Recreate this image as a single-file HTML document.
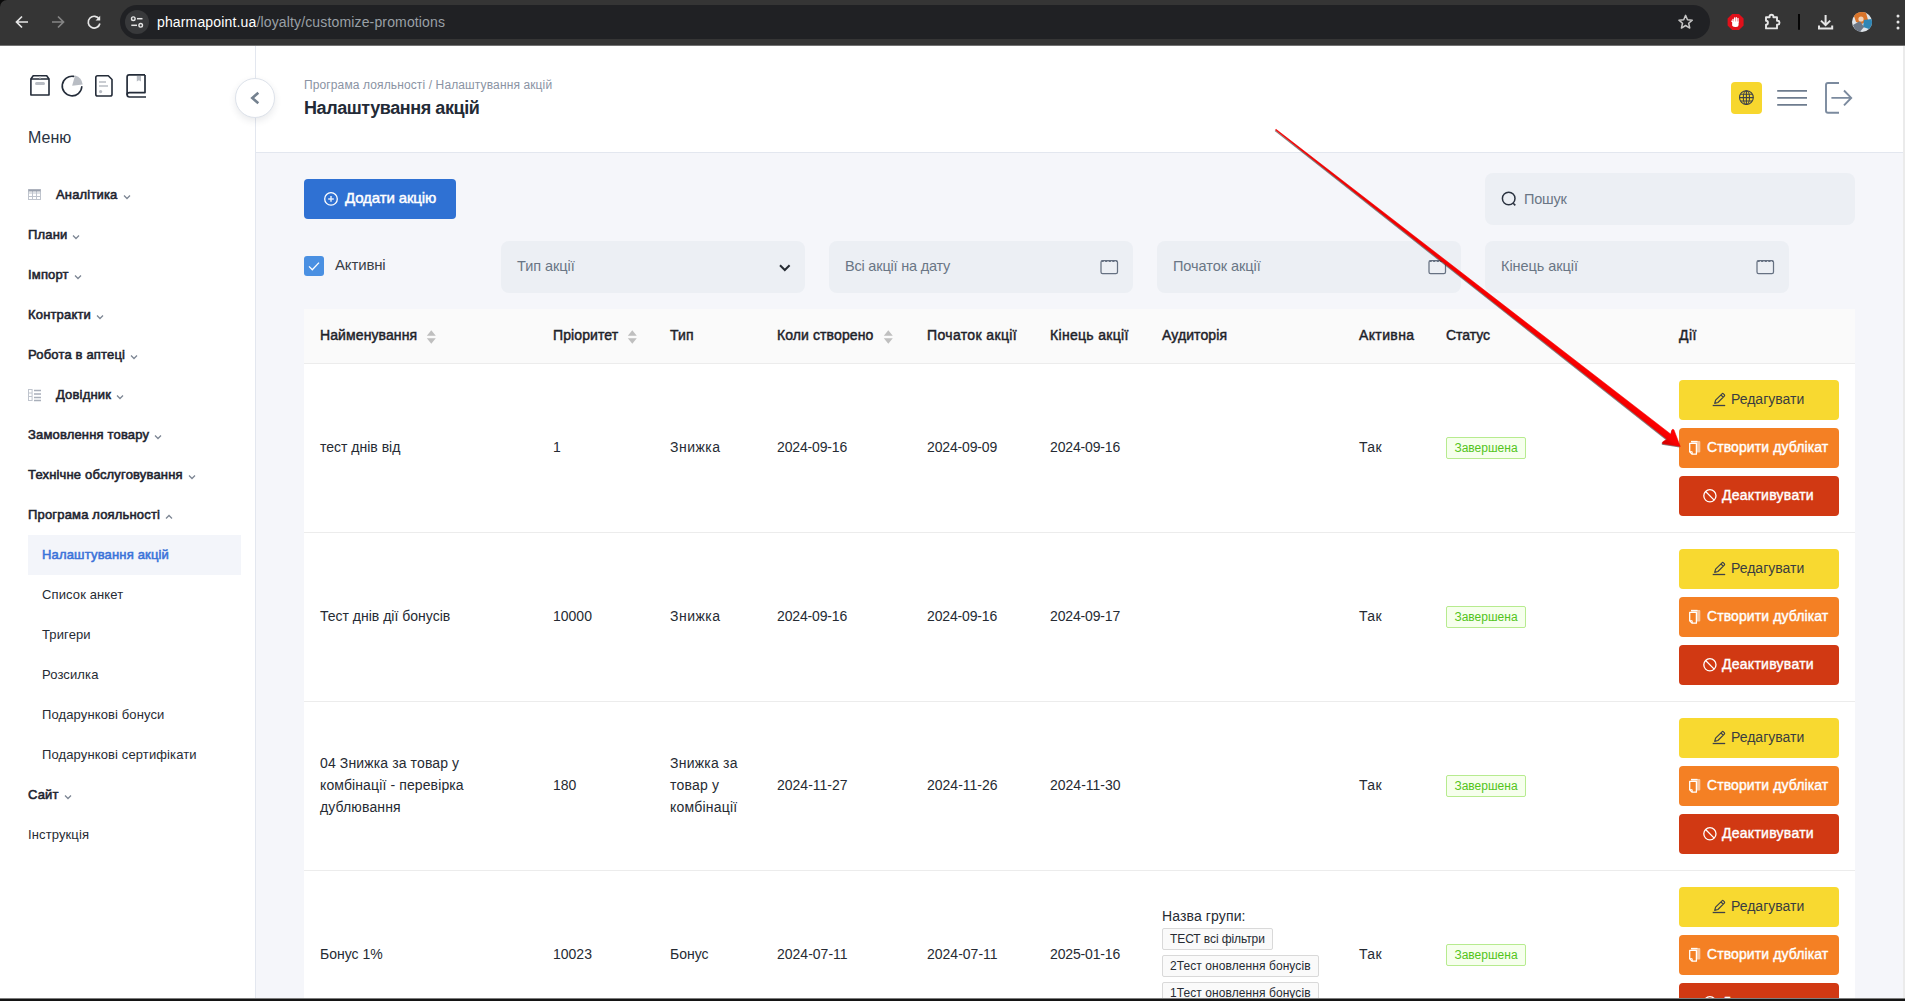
<!DOCTYPE html>
<html lang="uk">
<head>
<meta charset="utf-8">
<title>Налаштування акцій</title>
<style>
*{box-sizing:border-box;margin:0;padding:0}
html,body{width:1905px;height:1001px;overflow:hidden;background:#f5f6fa}
body{position:relative;font-family:"Liberation Sans",sans-serif;color:#262b33;font-size:14px}
.abs{position:absolute}
span.t{position:absolute;white-space:nowrap;line-height:1}
.m{-webkit-text-stroke:0.45px currentColor}
/* browser chrome */
#chrome{position:absolute;left:0;top:0;width:1905px;height:46px;background:#353535;border-bottom:1px solid #727272}
#pill{position:absolute;left:120px;top:5px;width:1590px;height:34px;border-radius:17px;background:#202124}
#sitei{position:absolute;left:125px;top:10px;width:24px;height:24px;border-radius:12px;background:#38393b}
/* sidebar */
#sidebar{position:absolute;left:0;top:46px;width:256px;height:955px;background:#fff;border-right:1px solid #e3e7ef}
.mi{position:absolute;left:28px;letter-spacing:.17px;-webkit-text-stroke:0.55px currentColor;font-size:13px;color:#1d232e;white-space:nowrap;line-height:16px}
.mi.sub{left:42px;letter-spacing:.12px;-webkit-text-stroke:0;color:#262b33}
.mi svg.chev{display:inline-block;vertical-align:middle;margin-left:5px;margin-top:3px}
/* header */
#header{position:absolute;left:256px;top:46px;width:1649px;height:107px;background:#fff;border-bottom:1px solid #e3e7ef}
/* filters */
.fbox{position:absolute;top:241px;width:304px;height:52px;border-radius:8px;background:#eceff4}
.fbox span{position:absolute;left:16px;top:16px;font-size:14.5px;letter-spacing:-.05px;line-height:18px;color:#6a7685;white-space:nowrap}
.cal{position:absolute;left:271px;top:18px}
/* table */
#thead{position:absolute;left:304px;top:309px;width:1551px;height:55px;background:#fafafa;border-bottom:1px solid #ececec}
#thead span{position:absolute;top:17px;letter-spacing:.1px;-webkit-text-stroke:0.45px currentColor;font-size:14px;line-height:18px;color:#1e2229;white-space:nowrap}
.sort{position:absolute;top:21px}
.row{position:absolute;left:304px;width:1551px;height:169px;background:#fff;border-bottom:1px solid #ececec}
.c{position:absolute;font-size:14px;line-height:22px;color:#262b33;white-space:nowrap}
.btn{position:absolute;left:1375px;width:160px;height:40px;border-radius:4px;font-size:14px;line-height:40px;white-space:nowrap}
.btn span{position:absolute;top:-1px}
.b1{background:#f8d930;color:#3a3d40}
.b2{background:#f48024;color:#fff;-webkit-text-stroke:0.4px #fff}
.b3{background:#d13913;color:#fff;-webkit-text-stroke:0.4px #fff}
.tag{position:absolute;left:1142px;top:73px;width:80px;height:22px;border:1px solid #b7eb8f;background:#f6ffed;border-radius:2px;color:#52c41a;font-size:12px;line-height:20px;text-align:center}
.gtag{position:absolute;left:858px;height:22px;border:1px solid #d9d9d9;background:#fafafa;border-radius:2px;color:#262b33;font-size:12px;line-height:20px;padding:0 7px;white-space:nowrap}
</style>
</head>
<body>

<!-- ===== main content ===== -->
<div id="main">
<!-- add button -->
<div class="abs" style="left:304px;top:179px;width:152px;height:40px;border-radius:4px;background:#2f71d3"></div>
<span id="addtxt" class="t m" style="left:345px;top:190px;font-size:15px;letter-spacing:-.12px;color:#fff">Додати акцію</span>
<!-- search -->
<div class="abs" style="left:1485px;top:173px;width:370px;height:52px;border-radius:8px;background:#eceff4"></div>
<span class="t" id="search" style="left:1524px;top:192px;font-size:14.500px;letter-spacing:-.2px;color:#6a7685">Пошук</span>
<!-- checkbox -->
<div class="abs" style="left:304px;top:256px;width:20px;height:20px;border-radius:3px;background:#4a90e2"></div>
<span class="t" id="aktyvni" style="left:335px;top:257px;font-size:15px;letter-spacing:-.15px;color:#3a3f47">Активні</span>

<svg class="abs" style="left:323px;top:191px" width="16" height="16" viewBox="0 0 16 16"><circle cx="8" cy="7.900" r="6.300" fill="none" stroke="#fff" stroke-width="1.300"/><path d="M8 5.100V10.700M5.200 7.900H10.800" stroke="#fff" stroke-width="1.500" opacity=".85"/></svg>
<svg class="abs" style="left:1500px;top:190px" width="18" height="18" viewBox="0 0 18 18"><circle cx="8.700" cy="8.500" r="6.300" fill="none" stroke="#2b3340" stroke-width="1.500"/><path d="M13.200 13.300L15.300 15.400" stroke="#2b3340" stroke-width="1.600"/></svg>
<svg class="abs" style="left:304px;top:256px" width="20" height="20" viewBox="0 0 20 20"><path d="M5 10.400L8.300 13.700L15 6.600" fill="none" stroke="#fff" stroke-width="1.300"/></svg>
<!-- filters -->
<div class="fbox" style="left:501px"><span>Тип акції</span><svg class="abs" style="left:277px;top:22px" width="14" height="10" viewBox="0 0 14 10"><path d="M2 2.300L6.800 7L11.600 2.300" fill="none" stroke="#262b33" stroke-width="2"/></svg></div>
<div class="fbox" style="left:829px"><span style="letter-spacing:-.2px">Всі акції на дату</span><svg class="cal" width="19" height="16" viewBox="0 0 19 16"><rect x="1" y="1.700" width="16.500" height="12.800" rx="1.600" fill="none" stroke="#667182" stroke-width="1.250"/><path d="M1.500 2.200H17" stroke="#667182" stroke-width="1.500" stroke-dasharray="2.200 1.400"/></svg></div>
<div class="fbox" style="left:1157px"><span>Початок акції</span><svg class="cal" width="19" height="16" viewBox="0 0 19 16"><rect x="1" y="1.700" width="16.500" height="12.800" rx="1.600" fill="none" stroke="#667182" stroke-width="1.250"/><path d="M1.500 2.200H17" stroke="#667182" stroke-width="1.500" stroke-dasharray="2.200 1.400"/></svg></div>
<div class="fbox" style="left:1485px"><span>Кінець акції</span><svg class="cal" width="19" height="16" viewBox="0 0 19 16"><rect x="1" y="1.700" width="16.500" height="12.800" rx="1.600" fill="none" stroke="#667182" stroke-width="1.250"/><path d="M1.500 2.200H17" stroke="#667182" stroke-width="1.500" stroke-dasharray="2.200 1.400"/></svg></div>

<!-- table header -->
<div id="thead">
<span style="left:16px">Найменування</span><svg class="sort" style="left:122px" width="11" height="14" viewBox="0 0 11 14"><path d="M5.300 0.300L9.800 5.700H0.800Z M5.300 13.700L9.800 8.300H0.800Z" fill="#bfbfbf"/></svg>
<span style="left:249px">Пріоритет</span><svg class="sort" style="left:323px" width="11" height="14" viewBox="0 0 11 14"><path d="M5.300 0.300L9.800 5.700H0.800Z M5.300 13.700L9.800 8.300H0.800Z" fill="#bfbfbf"/></svg>
<span style="left:366px">Тип</span>
<span style="left:473px">Коли створено</span><svg class="sort" style="left:579px" width="11" height="14" viewBox="0 0 11 14"><path d="M5.300 0.300L9.800 5.700H0.800Z M5.300 13.700L9.800 8.300H0.800Z" fill="#bfbfbf"/></svg>
<span style="left:623px;letter-spacing:.36px">Початок акції</span>
<span style="left:746px;letter-spacing:.31px">Кінець акції</span>
<span style="left:858px">Аудиторія</span>
<span style="left:1055px;letter-spacing:.37px">Активна</span>
<span style="left:1142px;letter-spacing:-.05px">Статус</span>
<span style="left:1375px;letter-spacing:.4px">Дії</span>
</div>

<!-- rows -->
<div class="row" style="top:364px">
<div class="c" style="left:16px;top:72px">тест днів від</div>
<div class="c" style="left:249px;top:72px">1</div>
<div class="c" style="left:366px;top:72px;letter-spacing:.48px">Знижка</div>
<div class="c" style="left:473px;top:72px;letter-spacing:-.16px">2024-09-16</div>
<div class="c" style="left:623px;top:72px;letter-spacing:-.16px">2024-09-09</div>
<div class="c" style="left:746px;top:72px;letter-spacing:-.16px">2024-09-16</div>
<div class="c" style="left:1055px;top:72px;letter-spacing:.4px">Так</div>
<div class="tag">Завершена</div>
<div class="btn b1" style="top:16px"><svg class="abs" style="left:32px;top:12px" width="16" height="16" viewBox="0 0 16 16"><path d="M3.700 11.300L4.600 8.200L11 1.800Q11.700 1.100 12.400 1.800L13.300 2.700Q14 3.400 13.300 4.100L6.900 10.500Z M10 3L12.200 5.200" fill="none" stroke="#3d4148" stroke-width="1.200" stroke-linejoin="round"/><path d="M1.700 13.500H14.200" stroke="#3d4148" stroke-width="1.300"/></svg><span style="left:52px">Редагувати</span></div>
<div class="btn b2" style="top:64px"><svg class="abs" style="left:9px;top:12px" width="14" height="16" viewBox="0 0 14 16"><path d="M3.200 1H11.300Q12.300 1 12.300 2V11.600Q12.300 12.600 11.300 12.600H9V3.500H3.200Z" fill="rgba(255,255,255,.55)"/><path d="M3 1.400H9.500" stroke="#fff" stroke-width="1.100"/><path d="M1.700 3.400H8.400V14.200H4.200L1.700 11.700Z" fill="none" stroke="#fff" stroke-width="1.300" stroke-linejoin="round"/><path d="M1.700 11.700H4.200V14.200" fill="none" stroke="#fff" stroke-width="1"/></svg><span style="left:28px;letter-spacing:.1px">Створити дублікат</span></div>
<div class="btn b3" style="top:112px"><svg class="abs" style="left:23px;top:12px" width="16" height="16" viewBox="0 0 16 16"><circle cx="7.900" cy="7.800" r="6.100" fill="none" stroke="#fff" stroke-width="1.300"/><path d="M3.600 3.500L12.200 12.100" stroke="#fff" stroke-width="1.300"/></svg><span style="left:43px;letter-spacing:.27px">Деактивувати</span></div>
</div>

<div class="row" style="top:533px">
<div class="c" style="left:16px;top:72px">Тест днів дії бонусів</div>
<div class="c" style="left:249px;top:72px">10000</div>
<div class="c" style="left:366px;top:72px;letter-spacing:.48px">Знижка</div>
<div class="c" style="left:473px;top:72px;letter-spacing:-.16px">2024-09-16</div>
<div class="c" style="left:623px;top:72px;letter-spacing:-.16px">2024-09-16</div>
<div class="c" style="left:746px;top:72px;letter-spacing:-.16px">2024-09-17</div>
<div class="c" style="left:1055px;top:72px;letter-spacing:.4px">Так</div>
<div class="tag">Завершена</div>
<div class="btn b1" style="top:16px"><svg class="abs" style="left:32px;top:12px" width="16" height="16" viewBox="0 0 16 16"><path d="M3.700 11.300L4.600 8.200L11 1.800Q11.700 1.100 12.400 1.800L13.300 2.700Q14 3.400 13.300 4.100L6.900 10.500Z M10 3L12.200 5.200" fill="none" stroke="#3d4148" stroke-width="1.200" stroke-linejoin="round"/><path d="M1.700 13.500H14.200" stroke="#3d4148" stroke-width="1.300"/></svg><span style="left:52px">Редагувати</span></div>
<div class="btn b2" style="top:64px"><svg class="abs" style="left:9px;top:12px" width="14" height="16" viewBox="0 0 14 16"><path d="M3.200 1H11.300Q12.300 1 12.300 2V11.600Q12.300 12.600 11.300 12.600H9V3.500H3.200Z" fill="rgba(255,255,255,.55)"/><path d="M3 1.400H9.500" stroke="#fff" stroke-width="1.100"/><path d="M1.700 3.400H8.400V14.200H4.200L1.700 11.700Z" fill="none" stroke="#fff" stroke-width="1.300" stroke-linejoin="round"/><path d="M1.700 11.700H4.200V14.200" fill="none" stroke="#fff" stroke-width="1"/></svg><span style="left:28px;letter-spacing:.1px">Створити дублікат</span></div>
<div class="btn b3" style="top:112px"><svg class="abs" style="left:23px;top:12px" width="16" height="16" viewBox="0 0 16 16"><circle cx="7.900" cy="7.800" r="6.100" fill="none" stroke="#fff" stroke-width="1.300"/><path d="M3.600 3.500L12.200 12.100" stroke="#fff" stroke-width="1.300"/></svg><span style="left:43px;letter-spacing:.27px">Деактивувати</span></div>
</div>

<div class="row" style="top:702px">
<div class="c" style="left:16px;top:50px;letter-spacing:.12px">04 Знижка за товар у<br>комбінації - перевірка<br>дублювання</div>
<div class="c" style="left:249px;top:72px">180</div>
<div class="c" style="left:366px;top:50px;letter-spacing:.22px">Знижка за<br>товар у<br>комбінації</div>
<div class="c" style="left:473px;top:72px;letter-spacing:0">2024-11-27</div>
<div class="c" style="left:623px;top:72px;letter-spacing:0">2024-11-26</div>
<div class="c" style="left:746px;top:72px;letter-spacing:0">2024-11-30</div>
<div class="c" style="left:1055px;top:72px;letter-spacing:.4px">Так</div>
<div class="tag">Завершена</div>
<div class="btn b1" style="top:16px"><svg class="abs" style="left:32px;top:12px" width="16" height="16" viewBox="0 0 16 16"><path d="M3.700 11.300L4.600 8.200L11 1.800Q11.700 1.100 12.400 1.800L13.300 2.700Q14 3.400 13.300 4.100L6.900 10.500Z M10 3L12.200 5.200" fill="none" stroke="#3d4148" stroke-width="1.200" stroke-linejoin="round"/><path d="M1.700 13.500H14.200" stroke="#3d4148" stroke-width="1.300"/></svg><span style="left:52px">Редагувати</span></div>
<div class="btn b2" style="top:64px"><svg class="abs" style="left:9px;top:12px" width="14" height="16" viewBox="0 0 14 16"><path d="M3.200 1H11.300Q12.300 1 12.300 2V11.600Q12.300 12.600 11.300 12.600H9V3.500H3.200Z" fill="rgba(255,255,255,.55)"/><path d="M3 1.400H9.500" stroke="#fff" stroke-width="1.100"/><path d="M1.700 3.400H8.400V14.200H4.200L1.700 11.700Z" fill="none" stroke="#fff" stroke-width="1.300" stroke-linejoin="round"/><path d="M1.700 11.700H4.200V14.200" fill="none" stroke="#fff" stroke-width="1"/></svg><span style="left:28px;letter-spacing:.1px">Створити дублікат</span></div>
<div class="btn b3" style="top:112px"><svg class="abs" style="left:23px;top:12px" width="16" height="16" viewBox="0 0 16 16"><circle cx="7.900" cy="7.800" r="6.100" fill="none" stroke="#fff" stroke-width="1.300"/><path d="M3.600 3.500L12.200 12.100" stroke="#fff" stroke-width="1.300"/></svg><span style="left:43px;letter-spacing:.27px">Деактивувати</span></div>
</div>

<div class="row" style="top:871px;height:140px;border-bottom:0">
<div class="c" style="left:16px;top:72px">Бонус 1%</div>
<div class="c" style="left:249px;top:72px">10023</div>
<div class="c" style="left:366px;top:72px">Бонус</div>
<div class="c" style="left:473px;top:72px;letter-spacing:0">2024-07-11</div>
<div class="c" style="left:623px;top:72px;letter-spacing:0">2024-07-11</div>
<div class="c" style="left:746px;top:72px;letter-spacing:-.16px">2025-01-16</div>
<div class="c" style="left:858px;top:34px;letter-spacing:.12px">Назва групи:</div>
<div class="gtag" style="top:57px;letter-spacing:-.09px;width:111px">ТЕСТ всі фільтри</div>
<div class="gtag" style="top:84px;letter-spacing:.08px;width:157px">2Тест оновлення бонусів</div>
<div class="gtag" style="top:111px;letter-spacing:.08px;width:157px">1Тест оновлення бонусів</div>
<div class="c" style="left:1055px;top:72px;letter-spacing:.4px">Так</div>
<div class="tag">Завершена</div>
<div class="btn b1" style="top:16px"><svg class="abs" style="left:32px;top:12px" width="16" height="16" viewBox="0 0 16 16"><path d="M3.700 11.300L4.600 8.200L11 1.800Q11.700 1.100 12.400 1.800L13.300 2.700Q14 3.400 13.300 4.100L6.900 10.500Z M10 3L12.200 5.200" fill="none" stroke="#3d4148" stroke-width="1.200" stroke-linejoin="round"/><path d="M1.700 13.500H14.200" stroke="#3d4148" stroke-width="1.300"/></svg><span style="left:52px">Редагувати</span></div>
<div class="btn b2" style="top:64px"><svg class="abs" style="left:9px;top:12px" width="14" height="16" viewBox="0 0 14 16"><path d="M3.200 1H11.300Q12.300 1 12.300 2V11.600Q12.300 12.600 11.300 12.600H9V3.500H3.200Z" fill="rgba(255,255,255,.55)"/><path d="M3 1.400H9.500" stroke="#fff" stroke-width="1.100"/><path d="M1.700 3.400H8.400V14.200H4.200L1.700 11.700Z" fill="none" stroke="#fff" stroke-width="1.300" stroke-linejoin="round"/><path d="M1.700 11.700H4.200V14.200" fill="none" stroke="#fff" stroke-width="1"/></svg><span style="left:28px;letter-spacing:.1px">Створити дублікат</span></div>
<div class="btn b3" style="top:112px"><svg class="abs" style="left:23px;top:12px" width="16" height="16" viewBox="0 0 16 16"><circle cx="7.900" cy="7.800" r="6.100" fill="none" stroke="#fff" stroke-width="1.300"/><path d="M3.600 3.500L12.200 12.100" stroke="#fff" stroke-width="1.300"/></svg><span style="left:43px;letter-spacing:.27px">Деактивувати</span></div>
</div>
</div>

<!-- ===== header ===== -->
<div id="header"></div>
<span class="t" id="crumb" style="left:304px;top:79px;font-size:12px;letter-spacing:.12px;color:#8a93a3">Програма лояльності / Налаштування акцій</span>
<span class="t" id="title" style="left:304px;top:99px;font-size:18px;font-weight:bold;letter-spacing:-.42px;color:#232a36">Налаштування акцій</span>


<div class="abs" style="left:1731px;top:82px;width:31px;height:32px;border-radius:4px;background:#f7d72e"></div>
<svg class="abs" style="left:1700px;top:70px" width="180" height="60" viewBox="1700 70 180 60">
<g fill="none" stroke="#3d4148" stroke-width="1.100">
<circle cx="1746.4" cy="97.6" r="6.900"/>
<ellipse cx="1746.4" cy="97.6" rx="3.100" ry="6.900"/>
<path d="M1746.4 90.700V104.500M1739.5 97.600H1753.300M1740.500 94.200H1752.300M1740.500 101H1752.300"/>
</g>
<path d="M1777.200 90.900H1807M1777.200 97.900H1807M1777.200 104.900H1807" stroke="#6e7c8e" stroke-width="1.900"/>
<path d="M1839 83H1828Q1826 83 1826 85V110.800Q1826 112.800 1828 112.800H1839" fill="none" stroke="#7b8a9e" stroke-width="1.900"/>
<path d="M1831.400 97.900H1850.500M1844 90.500L1851.200 97.900L1844 105.300" fill="none" stroke="#7b8a9e" stroke-width="1.900"/>
</svg>
<!-- ===== sidebar ===== -->
<div id="sidebar"></div>
<div class="abs" style="left:28px;top:535px;width:213px;height:40px;background:#f3f5fa"></div>
<div class="mi" id="mi0" style="left:56px;top:187px"><span>Аналітика</span><svg class="chev" width="8" height="6" viewBox="0 0 8 6"><path d="M1 1.5L4 4.5L7 1.5" fill="none" stroke="#7d8694" stroke-width="1.3"/></svg></div>
<div class="mi" id="mi1" style="left:28px;top:227px"><span>Плани</span><svg class="chev" width="8" height="6" viewBox="0 0 8 6"><path d="M1 1.5L4 4.5L7 1.5" fill="none" stroke="#7d8694" stroke-width="1.3"/></svg></div>
<div class="mi" id="mi2" style="left:28px;top:267px"><span>Імпорт</span><svg class="chev" width="8" height="6" viewBox="0 0 8 6"><path d="M1 1.5L4 4.5L7 1.5" fill="none" stroke="#7d8694" stroke-width="1.3"/></svg></div>
<div class="mi" id="mi3" style="left:28px;top:307px"><span>Контракти</span><svg class="chev" width="8" height="6" viewBox="0 0 8 6"><path d="M1 1.5L4 4.5L7 1.5" fill="none" stroke="#7d8694" stroke-width="1.3"/></svg></div>
<div class="mi" id="mi4" style="left:28px;top:347px"><span>Робота в аптеці</span><svg class="chev" width="8" height="6" viewBox="0 0 8 6"><path d="M1 1.5L4 4.5L7 1.5" fill="none" stroke="#7d8694" stroke-width="1.3"/></svg></div>
<div class="mi" id="mi5" style="left:56px;top:387px"><span>Довідник</span><svg class="chev" width="8" height="6" viewBox="0 0 8 6"><path d="M1 1.5L4 4.5L7 1.5" fill="none" stroke="#7d8694" stroke-width="1.3"/></svg></div>
<div class="mi" id="mi6" style="left:28px;top:427px"><span>Замовлення товару</span><svg class="chev" width="8" height="6" viewBox="0 0 8 6"><path d="M1 1.5L4 4.5L7 1.5" fill="none" stroke="#7d8694" stroke-width="1.3"/></svg></div>
<div class="mi" id="mi7" style="left:28px;top:467px"><span>Технічне обслуговування</span><svg class="chev" width="8" height="6" viewBox="0 0 8 6"><path d="M1 1.5L4 4.5L7 1.5" fill="none" stroke="#7d8694" stroke-width="1.3"/></svg></div>
<div class="mi" id="mi8" style="left:28px;top:507px"><span>Програма лояльності</span><svg class="chev" width="8" height="6" viewBox="0 0 8 6"><path d="M1 4.5L4 1.5L7 4.5" fill="none" stroke="#7d8694" stroke-width="1.3"/></svg></div>
<div class="mi" id="mi9" style="left:42px;top:547px;color:#3b73d9"><span>Налаштування акцій</span></div>
<div class="mi sub" id="mi10" style="left:42px;top:587px"><span>Список анкет</span></div>
<div class="mi sub" id="mi11" style="left:42px;top:627px"><span>Тригери</span></div>
<div class="mi sub" id="mi12" style="left:42px;top:667px"><span>Розсилка</span></div>
<div class="mi sub" id="mi13" style="left:42px;top:707px"><span>Подарункові бонуси</span></div>
<div class="mi sub" id="mi14" style="left:42px;top:747px"><span>Подарункові сертифікати</span></div>
<div class="mi" id="mi15" style="left:28px;top:787px"><span>Сайт</span><svg class="chev" width="8" height="6" viewBox="0 0 8 6"><path d="M1 1.5L4 4.5L7 1.5" fill="none" stroke="#7d8694" stroke-width="1.3"/></svg></div>
<div class="mi sub" id="mi16" style="left:28px;top:827px"><span>Інструкція</span></div>

<svg class="abs" style="left:0;top:45px" width="300" height="400" viewBox="0 45 300 400">
<g fill="none" stroke="#242c39" stroke-width="1.6" stroke-linejoin="round">
<!-- box -->
<path d="M30.9 79H49V95H30.9Z"/><path d="M30.9 79L33.2 75.7H46.7L49 79"/>
<!-- pie -->
<path d="M73.7 76.4A9.8 9.8 0 1 0 81.8 86.7" stroke-linecap="round"/>
<!-- doc -->
<path d="M97.6 75.8H108.3L112 79.5V94.2Q112 96 110.2 96H97.6Q95.8 96 95.800 94.2V77.6Q95.8 75.8 97.6 75.8Z"/>
<!-- book -->
<path d="M145 74.9H129.2Q127.1 74.9 127.1 77V94.6Q127.1 97 129.5 97H146" stroke-width="1.7"/>
<path d="M145 74.9V92.6H129.5Q127.1 92.6 127.1 94.8" stroke-width="1.7"/>
</g>
<rect x="35" y="82" width="10" height="3" rx="1.5" fill="#b9bdc4"/>
<path d="M40 76V79" stroke="#b9bdc4" stroke-width="1"/>
<path d="M72.1 85.7L75.1 75.4A10.9 10.9 0 0 1 82.7 84.6Z" fill="#b9bdc4"/>
<path d="M99 82H106M99 86H108" stroke="#b9bdc4" stroke-width="1.7"/>
<circle cx="100.6" cy="91.6" r="1.6" fill="#b9bdc4"/>
<path d="M136.8 76H141V81.6L138.9 80.2L136.8 81.6Z" fill="#b9bdc4"/>
<!-- grid icon -->
<g stroke="#bfc4cd" stroke-width="1" fill="none">
<rect x="28.5" y="189.500" width="12" height="10"/><path d="M28.5 193H40.500M28.5 196.5H40.5M32.5 189.5V199.5M36.5 189.5V199.5"/>
</g>
<path d="M28.5 190.500H40.5" stroke="#9aa1ad" stroke-width="2"/>
<!-- list icon -->
<g stroke="#bfc4cd" stroke-width="1" fill="none">
<rect x="28.5" y="389.500" width="3.6" height="11"/><path d="M28.5 393H32M28.5 396.500H32"/>
</g>
<path d="M34 390.5H41M34 394H41M34 397.500H41M34 400.5H41" stroke="#a9afba" stroke-width="1.6"/>
</svg>
<div class="abs" style="left:235px;top:78px;width:40px;height:40px;border-radius:20px;background:#fff;border:1px solid #dde2ea;box-shadow:0 3px 7px rgba(40,50,70,.10)"></div>
<svg class="abs" style="left:246px;top:88px" width="20" height="20" viewBox="0 0 20 20"><path d="M12.300 4.700L6.300 10L12.300 15.300" fill="none" stroke="#74818f" stroke-width="2.600"/></svg>
<span class="t" id="menu" style="left:28px;top:130px;font-size:16px;color:#2a3342">Меню</span>

<!-- ===== browser chrome ===== -->
<div id="chrome">
<div id="pill"></div>
<div id="sitei"></div>

<svg class="abs" style="left:0;top:0" width="1905" height="45" viewBox="0 0 1905 45">
<!-- corner -->
<path d="M0 0H7A7 7 0 0 0 0 7Z" fill="#0a0a0a"/>
<!-- back -->
<path d="M28 22H17M22 16.5L16.5 22L22 27.5" fill="none" stroke="#e6e6e6" stroke-width="1.7"/>
<!-- forward -->
<path d="M52 22H63M58 16.5L63.5 22L58 27.5" fill="none" stroke="#858585" stroke-width="1.7"/>
<!-- reload -->
<path d="M99.3 19.3A5.9 5.9 0 1 0 99.9 23.5" fill="none" stroke="#e6e6e6" stroke-width="1.7"/>
<path d="M100.2 15.8V20.4H95.6Z" fill="#e6e6e6"/>
<!-- site info (tune) -->
<circle cx="133.3" cy="18.7" r="1.8" fill="none" stroke="#e6e6e6" stroke-width="1.4"/>
<path d="M137 18.7H142.5" stroke="#e6e6e6" stroke-width="1.5"/>
<circle cx="140.7" cy="25.3" r="1.8" fill="none" stroke="#e6e6e6" stroke-width="1.4"/>
<path d="M131.3 25.3H137" stroke="#e6e6e6" stroke-width="1.5"/>
<!-- star -->
<path d="M1685.60 15.33L1687.49 19.74L1692.26 20.14L1688.66 23.29L1689.74 28.02L1685.60 25.50L1681.46 28.02L1682.54 23.29L1678.94 20.14L1683.71 19.74Z" fill="none" stroke="#c6c6c6" stroke-width="1.5" stroke-linejoin="round"/>
<!-- adblock-like red ext -->
<path d="M1732.2 14H1739L1743.6 18.6V25.4L1739 30H1732.2L1727.6 25.4V18.6Z" fill="#e0101a"/>
<path d="M1733 25.5V19.5M1734.6 18V22M1736.3 17.6V22M1738 18.4V22.3M1733 22L1731.8 21.2" stroke="#fff" stroke-width="1.3" stroke-linecap="round"/>
<path d="M1732.4 21.5H1738.6V24.5Q1738.6 27 1736 27H1735Q1732.4 27 1732.4 24.5Z" fill="#fff"/>
<!-- puzzle -->
<path d="M1766 17.2H1769.6V16.6A1.9 1.9 0 0 1 1773.4 16.6V17.2H1777V20.8H1777.6A1.9 1.9 0 0 1 1777.6 24.6H1777V28.4H1766V24.6A1.9 1.9 0 0 0 1766 20.8Z" fill="none" stroke="#e6e6e6" stroke-width="1.9" stroke-linejoin="round"/>
<!-- divider -->
<path d="M1799 14V29.8" stroke="#050505" stroke-width="2"/>
<!-- download -->
<path d="M1825.6 15V25M1821 20.6L1825.6 25.2L1830.2 20.6M1819 25.5V28.6H1832.2V25.5" fill="none" stroke="#e6e6e6" stroke-width="2"/>
<!-- avatar -->
<circle cx="1862" cy="22" r="10" fill="#dfe5ea"/>
<path d="M1854 16A10 10 0 0 1 1866 12.8L1868 20L1862 24L1856 22Z" fill="#d9742a"/>
<path d="M1864 20L1871.5 19A10 10 0 0 1 1869 29L1863 27Z" fill="#2f86b5"/>
<path d="M1853 25L1860 21L1864 27L1860 31.8A10 10 0 0 1 1853 25Z" fill="#6d7785"/>
<circle cx="1861" cy="19" r="2.6" fill="#f1d3b8"/>
<!-- menu dots -->
<circle cx="1898" cy="16" r="1.5" fill="#e6e6e6"/><circle cx="1898" cy="22" r="1.5" fill="#e6e6e6"/><circle cx="1898" cy="28" r="1.5" fill="#e6e6e6"/>
</svg>
<span class="t" id="url" style="left:157px;top:15px;font-size:14px;letter-spacing:.15px;color:#fff">pharmapoint.ua<span style="color:#9aa0a6">/loyalty/customize-promotions</span></span>
</div>


<!-- ===== annotation arrow ===== -->
<svg class="abs" style="left:1250px;top:110px" width="460" height="370" viewBox="1250 110 460 370">
<defs>
<linearGradient id="ag" gradientUnits="userSpaceOnUse" x1="1674" y1="436" x2="1668" y2="443.600"><stop offset="0" stop-color="#ff0000"/><stop offset=".5" stop-color="#f80000"/><stop offset="1" stop-color="#d80000"/></linearGradient>
<filter id="sh" x="-5%" y="-5%" width="110%" height="110%"><feGaussianBlur stdDeviation=".7"/></filter>
</defs>
<g transform="translate(-.700 1)" filter="url(#sh)" opacity=".6"><path id="ap" d="M1275.400 129.900L1276.100 129.300L1670.900 434.200L1671.900 429.900Q1672.800 428.700 1674 429.900L1680.300 446.500L1662.700 443.800Q1661.700 442.200 1663.500 441.200L1666.900 439.300Z" fill="#333"/></g>
<path d="M1275.400 129.900L1276.100 129.300L1670.900 434.200L1671.900 429.900Q1672.800 428.700 1674 429.900L1680.300 446.500L1662.700 443.800Q1661.700 442.200 1663.500 441.200L1666.900 439.300Z" fill="url(#ag)" stroke="#f00000" stroke-width=".5" stroke-linejoin="round"/>
</svg>
<div class="abs" style="left:1903px;top:46px;width:2px;height:952px;background:#ebebeb"></div>
<!-- bottom edge -->
<div class="abs" style="left:0;top:998px;width:1905px;height:3px;background:#141414;border-top:1px solid #7d7d7d"></div>
</body>
</html>
